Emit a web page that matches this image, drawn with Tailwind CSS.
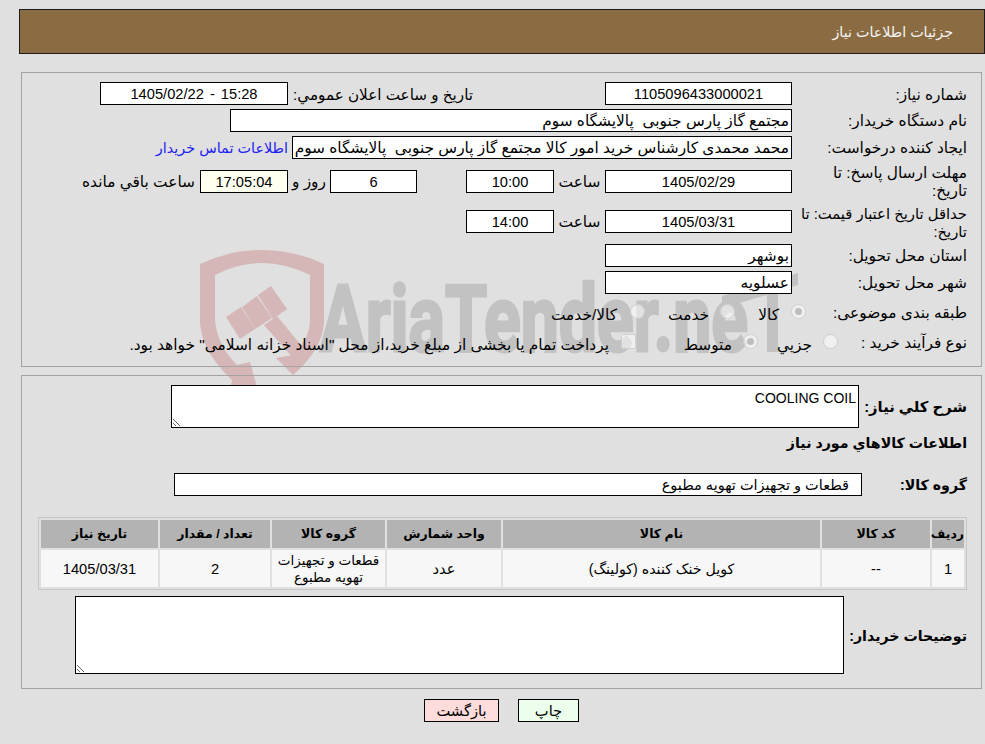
<!DOCTYPE html>
<html lang="fa" dir="rtl">
<head>
<meta charset="UTF-8">
<title>جزئیات اطلاعات نیاز</title>
<script src="https://cdn.jsdelivr.net/npm/@tailwindcss/browser@4"></script>
</head>
<body class="relative h-[744px] w-[985px] overflow-hidden bg-[#e0e0e0] font-['Liberation_Sans','DejaVu_Sans',sans-serif] text-[15.4px] leading-[18px] text-black">

<!-- watermark, sits behind the form -->
<svg class="absolute left-0 top-0 z-0" width="985" height="744" viewBox="0 0 985 744">
  <g fill="#d6b7b7">
    <path fill-rule="evenodd" d="M200 264Q230 250 262 250Q295 250 324 264V323Q322 350 293 375L276 358L293 355Q310 338 310 320V275Q285 263 262 263Q238 263 215 275V320Q217 345 237 365L250 362L257 387L231 385L232 380Q202 352 200 323Z"/>
    <path d="M226 317L241 307L255 329L240 339Z"/>
    <path d="M242 307L257 296L272 318L255 329Z"/>
    <path d="M258 295L271 286L287 309L273 319Z"/>
    <path d="M264 325L277 316L305 350L293 358Z"/>
  </g>
  <text x="320" y="351" direction="ltr" text-anchor="start" textLength="428" lengthAdjust="spacingAndGlyphs" fill="#c2c2c2" stroke="#c2c2c2" stroke-width="3" font-family="Roboto" font-weight="700" font-size="92">AriaTender.ne</text>
  <path d="M722 296L798 273V285L778 291V352H767V295L722 308Z" fill="#c2c2c2"/>
</svg>

<div class="relative z-10">
  <header class="mt-[9px] flex h-[45px] w-[966px] items-center border border-[#1c1c1c] bg-[#8b6c42] pr-[31px] text-[14.3px] text-[#f4f4f4]">جزئیات اطلاعات نیاز</header>

  <section class="mt-[18px] mr-[3px] h-[295px] w-[961px] border border-[#a3a3a3] pr-[14px] pt-[9px]">
    <div class="flex h-[23px] items-center">
      <div class="mt-[2px] w-[175px] shrink-0">شماره نیاز:</div>
      <div class="flex h-[23px] w-[187px] items-center justify-center border border-black bg-white text-[14.67px]">1105096433000021</div>
      <div class="mr-[132px] mt-[2px] w-[180px] whitespace-nowrap text-[15.2px]">تاریخ و ساعت اعلان عمومي:</div>
      <div class="mr-[5px] flex h-[23px] w-[188px] items-center justify-center border border-black bg-white text-[14.67px] [word-spacing:2px]" dir="ltr">1405/02/22 - 15:28</div>
    </div>
    <div class="mt-[4px] flex h-[23px] items-center">
      <div class="w-[175px] shrink-0">نام دستگاه خریدار:</div>
      <div class="flex h-[23px] w-[562px] items-center whitespace-pre border border-black bg-white px-[2px]">مجتمع گاز پارس جنوبی  پالایشگاه سوم</div>
    </div>
    <div class="mt-[4px] flex h-[23px] items-center">
      <div class="w-[175px] shrink-0">ایجاد کننده درخواست:</div>
      <div class="flex h-[23px] w-[500px] items-center whitespace-pre border border-black bg-white px-[2px]">محمد محمدی کارشناس خرید امور کالا مجتمع گاز پارس جنوبی  پالایشگاه سوم</div>
      <a href="#" class="mr-[4px] whitespace-nowrap text-[14.4px] text-[#2020f0]">اطلاعات تماس خریدار</a>
    </div>
    <div class="mt-[11px] flex h-[23px] items-center">
      <div class="w-[175px] shrink-0 pl-[4px]">مهلت ارسال پاسخ: تا تاریخ:</div>
      <div class="flex h-[23px] w-[187px] items-center justify-center border border-black bg-white text-[14.67px]">1405/02/29</div>
      <div class="w-[51px] text-center">ساعت</div>
      <div class="flex h-[23px] w-[88px] items-center justify-center border border-black bg-white text-[14.67px]">10:00</div>
      <div class="mr-[49px] flex h-[23px] w-[87px] items-center justify-center border border-black bg-white text-[14.67px]">6</div>
      <div class="w-[42px] text-center">روز و</div>
      <div class="flex h-[23px] w-[88px] items-center justify-center border border-black bg-[#fffff0] text-[14.67px]">17:05:04</div>
      <div class="mr-[5px] whitespace-nowrap">ساعت باقي مانده</div>
    </div>
    <div class="mt-[17px] flex h-[23px] items-center">
      <div class="mt-[3px] w-[175px] shrink-0 text-[14.8px]">حداقل تاریخ اعتبار قیمت: تا تاریخ:</div>
      <div class="flex h-[23px] w-[187px] items-center justify-center border border-black bg-white text-[14.67px]">1405/03/31</div>
      <div class="w-[51px] text-center">ساعت</div>
      <div class="flex h-[23px] w-[88px] items-center justify-center border border-black bg-white text-[14.67px]">14:00</div>
    </div>
    <div class="mt-[11px] flex h-[23px] items-center">
      <div class="w-[175px] shrink-0">استان محل تحویل:</div>
      <div class="flex h-[23px] w-[187px] items-center border border-black bg-white px-[2px]">بوشهر</div>
    </div>
    <div class="mt-[4px] flex h-[23px] items-center">
      <div class="w-[175px] shrink-0">شهر محل تحویل:</div>
      <div class="flex h-[23px] w-[187px] items-center border border-black bg-white px-[2px]">عسلویه</div>
    </div>
    <div class="mt-[6px] flex h-[23px] items-center">
      <div class="mt-[3px] w-[161px] shrink-0 whitespace-nowrap">طبقه بندی موضوعی:</div>
      <span class="flex h-[15px] w-[15px] items-center justify-center rounded-full border border-[#cfcfcf] bg-white/50"><span class="h-[7px] w-[7px] rounded-full bg-[#bdbdbd]"></span></span>
      <div class="mr-[12px] mt-[6px] w-[19px] whitespace-nowrap">کالا</div>
      <span class="mr-[25px] h-[15px] w-[15px] rounded-full border border-[#cfcfcf] bg-white/50"></span>
      <div class="mr-[11px] mt-[6px] w-[39px] whitespace-nowrap">خدمت</div>
      <span class="mr-[25px] h-[15px] w-[15px] rounded-full border border-[#cfcfcf] bg-white/50"></span>
      <div class="mr-[13px] mt-[6px] whitespace-nowrap">کالا/خدمت</div>
    </div>
    <div class="mt-[7px] flex h-[23px] items-center">
      <div class="mt-[2px] w-[129px] shrink-0">نوع فرآیند خرید :</div>
      <span class="h-[15px] w-[15px] rounded-full border border-[#cfcfcf] bg-white/50"></span>
      <div class="mr-[11px] mt-[6px] w-[34px] whitespace-nowrap">جزیي</div>
      <span class="mr-[20px] flex h-[15px] w-[15px] items-center justify-center rounded-full border border-[#cfcfcf] bg-white/50"><span class="h-[7px] w-[7px] rounded-full bg-[#bdbdbd]"></span></span>
      <div class="mr-[11px] mt-[6px] w-[45px] whitespace-nowrap">متوسط</div>
      <span class="mr-[51px] h-[15px] w-[15px] rounded-[2px] border border-[#cfcfcf] bg-white/50"></span>
      <div class="mr-[12px] mt-[6px] whitespace-nowrap">پرداخت تمام یا بخشی از مبلغ خرید،از محل "اسناد خزانه اسلامی" خواهد بود.</div>
    </div>
  </section>

  <section class="mt-[8px] mr-[3px] h-[314px] w-[961px] border border-[#a3a3a3] pr-[14px] pt-[9px]">
    <div class="flex items-center">
      <div class="w-[108px] shrink-0 whitespace-nowrap text-[14.8px] font-bold">شرح كلي نياز:</div>
      <textarea readonly class="block h-[43px] w-[688px] border border-black bg-white px-[2px] py-[3px] text-[14px] leading-[18px] outline-none">COOLING COIL</textarea>
    </div>
    <div class="mt-[5px] h-[21px] text-[14.2px] font-bold leading-[21px]">اطلاعات کالاهاي مورد نياز</div>
    <div class="mt-[19px] flex h-[23px] items-center">
      <div class="w-[105px] shrink-0 whitespace-nowrap text-[14.2px] font-bold">گروه کالا:</div>
      <div class="flex h-[23px] w-[688px] items-center border border-black bg-white pr-[12px] text-[14.5px]">قطعات و تجهیزات تهویه مطبوع</div>
    </div>
    <table class="mt-[21px] w-[929px] table-fixed border-separate border-spacing-[2px] border border-[#c6c6c6] text-center text-[14.67px]">
      <colgroup>
        <col class="w-[32px]"><col class="w-[108px]"><col class="w-[317px]"><col class="w-[114px]"><col class="w-[113px]"><col class="w-[110px]"><col class="w-[117px]">
      </colgroup>
      <thead>
        <tr class="h-[28px] bg-[#b3b3b3] text-[12.5px] font-bold">
          <th>ردیف</th>
          <th>کد کالا</th>
          <th>نام کالا</th>
          <th>واحد شمارش</th>
          <th>گروه کالا</th>
          <th>تعداد / مقدار</th>
          <th>تاریخ نیاز</th>
        </tr>
      </thead>
      <tbody>
        <tr class="h-[37px] bg-[#f7f7f7]">
          <td>1</td>
          <td>--</td>
          <td class="text-[14.2px]">کویل خنک کننده (کولینگ)</td>
          <td>عدد</td>
          <td class="text-[13.5px] leading-[17px]">قطعات و تجهیزات تهویه مطبوع</td>
          <td>2</td>
          <td>1405/03/31</td>
        </tr>
      </tbody>
    </table>
    <div class="mt-[6px] flex items-center">
      <div class="mt-[2px] w-[123px] shrink-0 whitespace-nowrap text-[14.2px] font-bold">توضیحات خریدار:</div>
      <textarea readonly class="block h-[78px] w-[769px] border border-black bg-white outline-none"></textarea>
    </div>
  </section>

  <div class="mr-[406px] mt-[10px] flex gap-[19px]">
    <button class="h-[23px] w-[61px] border border-black bg-[#ecffec] text-[14.67px]">چاپ</button>
    <button class="h-[23px] w-[75px] border border-black bg-[#ffdcdc] text-[14.67px]">بازگشت</button>
  </div>
</div>
</body>
</html>
